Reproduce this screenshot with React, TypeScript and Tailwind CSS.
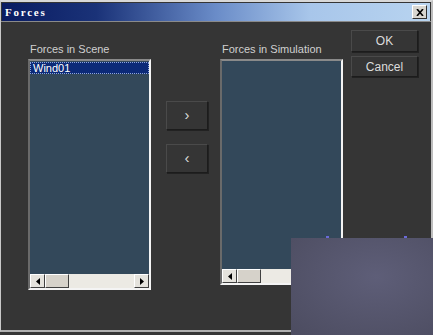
import React from 'react';

const font = { fontFamily: '"Liberation Sans", "DejaVu Sans", Arial, sans-serif' };

function ArrowBtn({ dir }: { dir: 'left' | 'right' }) {
  return (
    <div className="w-[15px] h-[14px] bg-[#e4e2dc] border-t border-l border-white border-r border-b border-r-[#404040] border-b-[#404040] flex items-center justify-center">
      <svg width="4" height="7" viewBox="0 0 4 7">
        {dir === 'left' ? <path d="M4 0 L0 3.5 L4 7 Z" fill="#000" /> : <path d="M0 0 L4 3.5 L0 7 Z" fill="#000" />}
      </svg>
    </div>
  );
}

function ListBox({ h, items }: { h: string; items: string[] }) {
  return (
    <div className={`w-[123px] ${h} flex flex-col border-2 border-t-[#8a8a8a] border-l-[#6a6a6a] border-r-[#f4f4f4] border-b-[#f4f4f4] bg-[#33485a]`}>
      <div className="flex-1 pt-[1px]">
        {items.map((it) => (
          <div
            key={it}
            className="h-[12px] bg-[#0c2a78] text-white text-[11px] leading-[11px] pl-[2px] border border-dotted border-[#8fa6d8]"
          >
            {it}
          </div>
        ))}
      </div>
      <div className="h-[14px] flex bg-[#eceae4]">
        <ArrowBtn dir="left" />
        <div className="w-[24px] h-[14px] bg-[#d6d2ca] border-t border-l border-white border-r border-b border-r-[#404040] border-b-[#404040]" />
        <div className="flex-1" />
        <ArrowBtn dir="right" />
      </div>
    </div>
  );
}

function DarkBtn({ label, cls }: { label: string; cls: string }) {
  return (
    <div
      className={`${cls} flex items-center justify-center bg-[#353535] border border-t-[#4a4a4a] border-l-[#4a4a4a] border-r-[#1c1c1c] border-b-[#1c1c1c] shadow-[1px_1px_0_#222] text-[#dcdcdc]`}
    >
      {label}
    </div>
  );
}

export default function App() {
  return (
    <div className="relative w-[433px] h-[335px] bg-[#363636] overflow-hidden" style={font}>
      <div className="w-[433px] h-[332px] flex flex-col border-t-2 border-l border-r-2 border-b-2 border-t-[#d8d8d8] border-l-[#c8c8c8] border-r-[#bdbdbd] border-b-[#b0b0b0] bg-[#353535]">
        {/* title bar */}
        <div className="h-[18px] mt-[1px] mx-[1px] flex items-center justify-between bg-[linear-gradient(to_right,#0a1c62_0%,#1a3278_22%,#6a8cc8_50%,#a8c6ea_72%,#b8d4f0_100%)]">
          <span
            className="pl-[3px] text-white text-[11px] font-bold tracking-[0.16em]"
            style={{ fontFamily: '"Liberation Serif", "DejaVu Serif", serif' }}
          >
            Forces
          </span>
          <div className="w-[15px] h-[14px] mr-[3px] bg-[#d8d6d0] border border-t-white border-l-white border-r-[#303030] border-b-[#303030] flex items-center justify-center">
            <svg width="8" height="7" viewBox="0 0 8 7">
              <path d="M1 0 L7 7 M7 0 L1 7" stroke="#000" strokeWidth="1.6" />
            </svg>
          </div>
        </div>
        <div className="h-[1px] bg-[#8a8a8a]" />

        {/* body */}
        <div className="flex-1 flex pl-[27px] pt-[8px]">
          <div className="flex flex-col mt-[12px]">
            <span className="text-[11px] text-[#d0d0d0] leading-[14px] pl-[2px] mb-[3px]">Forces in Scene</span>
            <ListBox h="h-[231px]" items={['Wind01']} />
          </div>

          <div className="flex flex-col ml-[15px] mt-[71px] gap-[14px]">
            <DarkBtn label="›" cls="w-[42px] h-[29px] text-[15px]" />
            <DarkBtn label="‹" cls="w-[42px] h-[29px] text-[15px]" />
          </div>

          <div className="flex flex-col ml-[12px] mt-[12px]">
            <span className="text-[11px] text-[#d0d0d0] leading-[14px] pl-[2px] mb-[3px]">Forces in Simulation</span>
            <ListBox h="h-[226px]" items={[]} />
          </div>

          <div className="flex flex-col ml-[8px] gap-[4px]">
            <DarkBtn label="OK" cls="w-[67px] h-[22px] text-[12px]" />
            <DarkBtn label="Cancel" cls="w-[67px] h-[21px] text-[12px]" />
          </div>
        </div>
      </div>

      {/* overlay patch */}
      <div className="absolute left-[291px] top-[238px] w-[142px] h-[97px] bg-[radial-gradient(ellipse_at_60%_40%,#5e5e78,#4c4c60)]" />
      <div className="absolute left-[326px] top-[236px] w-[3px] h-[2px] bg-[#6a6ad8]" />
      <div className="absolute left-[404px] top-[236px] w-[3px] h-[2px] bg-[#6a6ad8]" />
    </div>
  );
}
